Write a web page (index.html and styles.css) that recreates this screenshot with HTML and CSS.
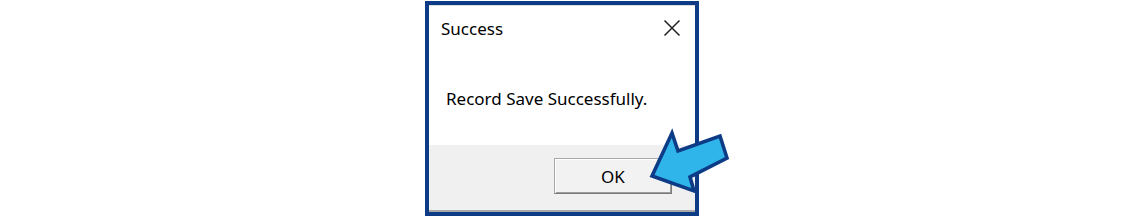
FILE: index.html
```html
<!DOCTYPE html>
<html>
<head>
<meta charset="utf-8">
<link rel="stylesheet" href="styles.css">
</head>
<body>
<div class="stage">
  <div class="dialog">
    <div class="inner">
      <div class="titlebar">
        <span class="title">Success</span>
        <svg class="close" width="18" height="18" viewBox="0 0 18 18"><path d="M1.5 1.5 L16.5 16.5 M16.5 1.5 L1.5 16.5" stroke="#222" stroke-width="1.5" fill="none"/></svg>
      </div>
      <div class="content">
        <p class="message">Record Save Successfully.</p>
      </div>
      <div class="footer">
        <button class="ok">OK</button>
      </div>
    </div>
  </div>
  <svg class="arrow" width="96" height="76" viewBox="0 0 96 76"><polygon points="12,51 32,8 38,26 80,11 87,33 50,52 54,66" fill="#30b5ea" stroke="#0d3b86" stroke-width="3.6" stroke-linejoin="miter"/></svg>
</div>
</body>
</html>
```

FILE: styles.css
```css
html, body {
  margin: 0;
  padding: 0;
  background: #ffffff;
}
body {
  width: 1123px;
  height: 217px;
  overflow: hidden;
  font-family: "Noto Sans", "Open Sans", sans-serif;
}
.stage {
  position: relative;
  display: flex;
  justify-content: center;
  padding-top: 1px;
  padding-left: 1px;
}
.dialog {
  width: 274px;
  height: 215px;
  box-sizing: border-box;
  border: 4px solid #0d3b86;
  background: #ffffff;
}
.inner {
  height: 100%;
  box-sizing: border-box;
  border-top: 1px solid #dcdcdc;
  border-bottom: 2px solid #a8a8a8;
  display: flex;
  flex-direction: column;
}
.titlebar {
  height: 44px;
  display: flex;
  align-items: center;
  justify-content: space-between;
  padding: 0 14px 0 12px;
}
.title {
  font-size: 17px;
  color: #000;
  margin-top: 0;
}
.close {
  display: block;
  margin-top: -1px;
}
.content {
  flex: 1;
  display: flex;
  align-items: center;
  padding-left: 17px;
}
.message {
  margin: 2px 0 0 0;
  font-size: 17px;
  color: #000;
}
.footer {
  height: 65px;
  background: #f0f0f0;
  display: flex;
  justify-content: flex-end;
  align-items: flex-start;
  padding: 13px 23px 0 0;
  box-sizing: border-box;
}
.ok {
  width: 118px;
  height: 36px;
  box-sizing: border-box;
  border: 1px solid #a9a9a9;
  border-right-color: #7a7a7a;
  border-bottom-color: #7a7a7a;
  box-shadow: inset 1px 1px 0 #ffffff, inset -1px -1px 0 #9b9b9b;
  background: #f2f2f2;
  font-family: "Noto Sans", "Open Sans", sans-serif;
  font-size: 17px;
  color: #000;
  padding: 0;
}
.arrow {
  position: absolute;
  left: 640px;
  top: 125px;
}
```
